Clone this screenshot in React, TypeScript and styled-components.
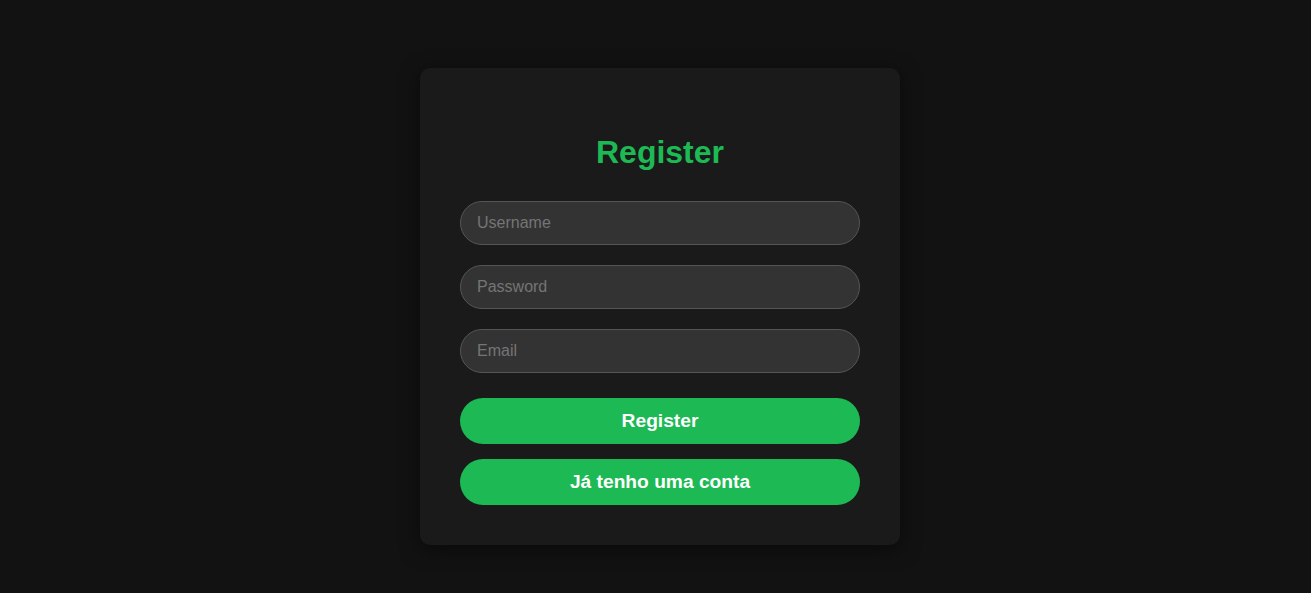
import React from "react";
import styled, { createGlobalStyle } from "styled-components";

const Global = createGlobalStyle`
  html, body { margin: 0; padding: 0; background: #121212; }
  body { font-family: "Liberation Sans", Arial, sans-serif; }
  * { box-sizing: border-box; }
`;

const Page = styled.div`
  min-height: 593px;
  display: flex;
  justify-content: center;
  align-items: flex-start;
  padding: 68px 0 0 9px;
`;

const Card = styled.div`
  width: 480px;
  background: #1a1a1a;
  border-radius: 10px;
  padding: 40px;
  box-shadow: 0 4px 20px rgba(0, 0, 0, 0.5);
  display: flex;
  flex-direction: column;
`;

const Title = styled.h1`
  margin: 26px 0 30px;
  font-size: 32px;
  line-height: 37px;
  font-weight: 700;
  color: #1db954;
  text-align: center;
`;

const Form = styled.form`
  display: flex;
  flex-direction: column;
`;

const Input = styled.input`
  width: 100%;
  height: 44px;
  padding: 0 16px;
  margin-bottom: 20px;
  border: 1px solid #555;
  border-radius: 22px;
  background: #333;
  color: #fff;
  font-family: "Liberation Sans", Arial, sans-serif;
  font-size: 16px;
  outline: none;
  &::placeholder { color: #757575; }
`;

const Button = styled.button<{ $first?: boolean }>`
  width: 100%;
  height: 46px;
  margin-top: ${(p) => (p.$first ? "5px" : "15px")};
  border: none;
  border-radius: 23px;
  background: #1db954;
  color: #fff;
  font-family: "Liberation Sans", Arial, sans-serif;
  font-size: 19.2px;
  font-weight: 700;
  cursor: pointer;
`;

export default function App() {
  return (
    <>
      <Global />
      <Page>
        <Card>
          <Title>Register</Title>
          <Form onSubmit={(e) => e.preventDefault()}>
            <Input placeholder="Username" />
            <Input type="password" placeholder="Password" />
            <Input type="email" placeholder="Email" />
            <Button $first type="submit">Register</Button>
            <Button type="button">Já tenho uma conta</Button>
          </Form>
        </Card>
      </Page>
    </>
  );
}
